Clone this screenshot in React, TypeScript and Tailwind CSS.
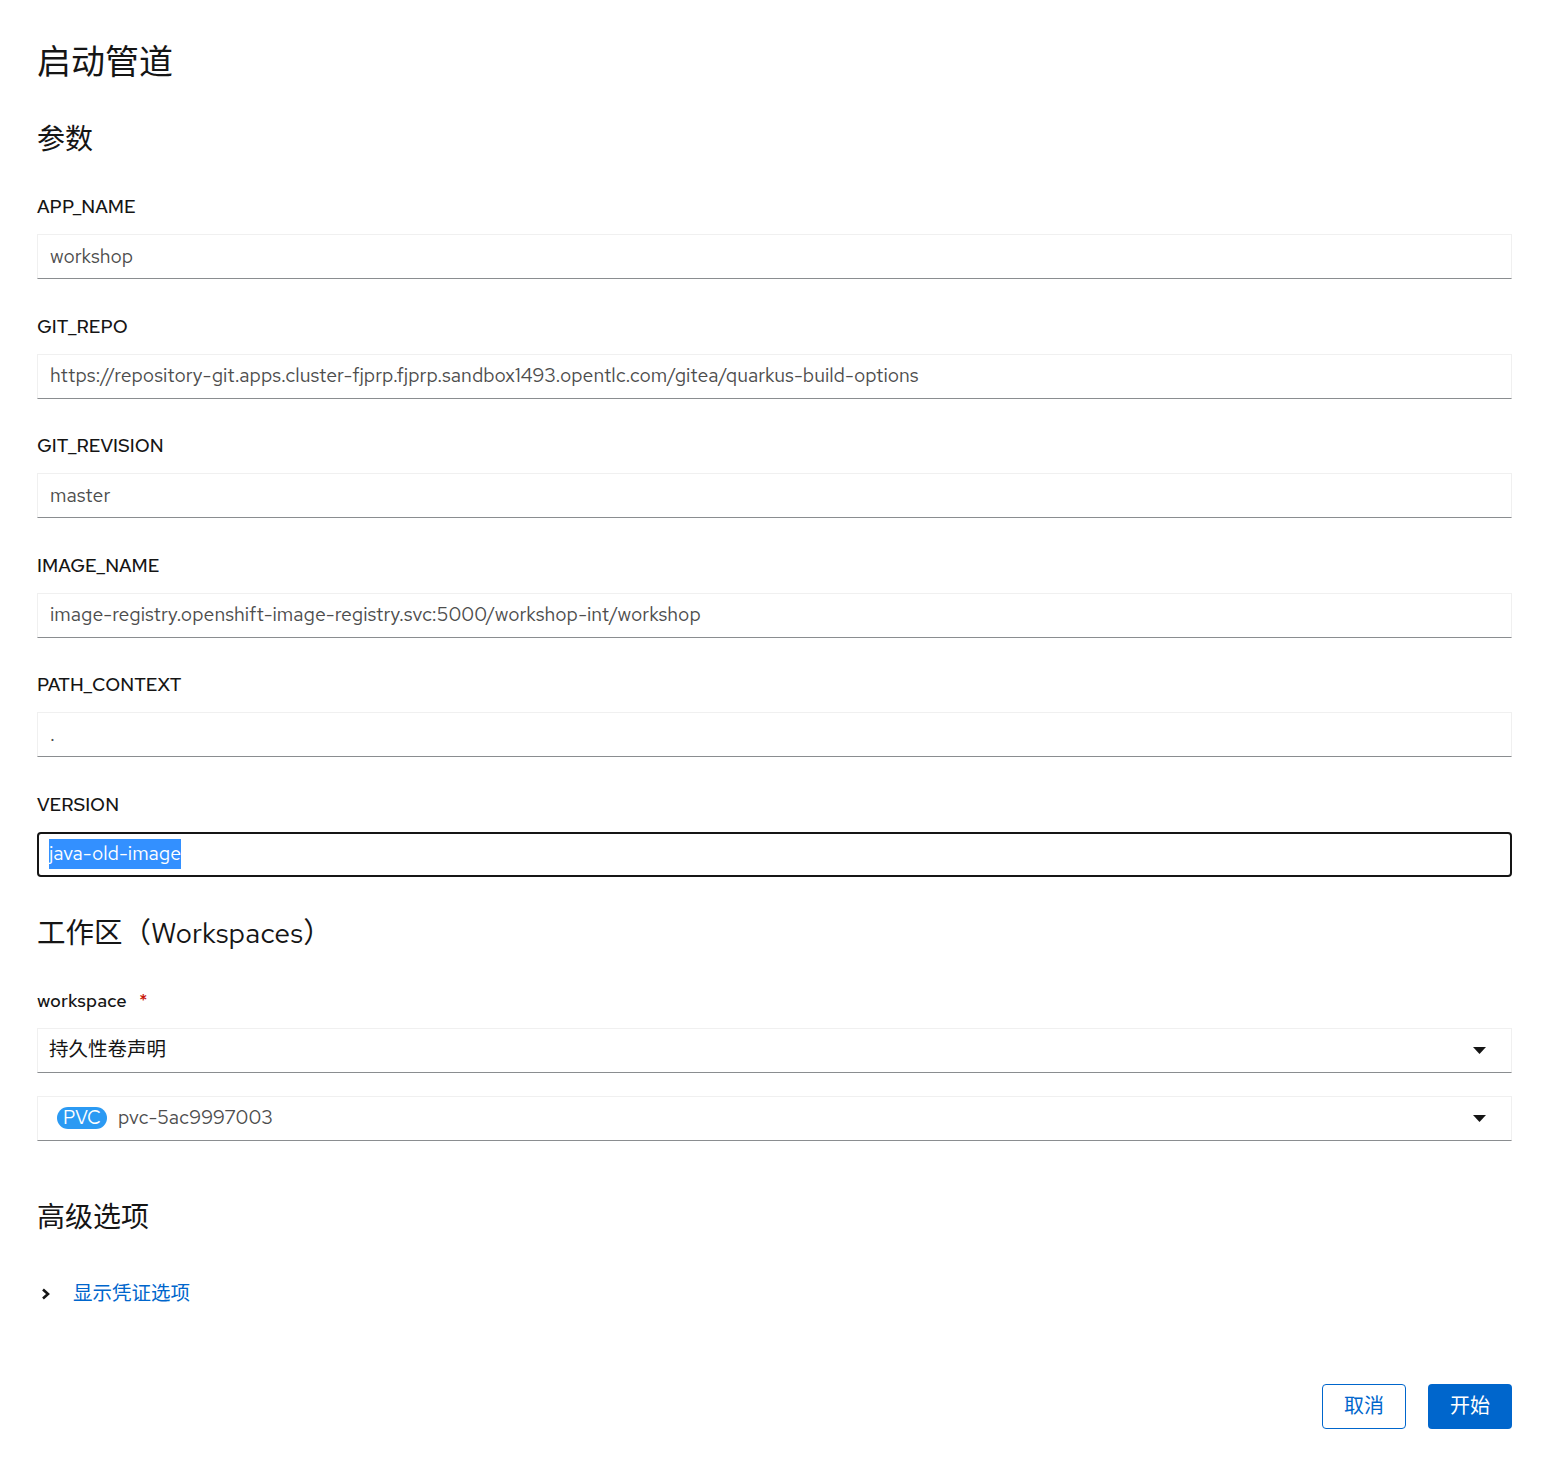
import React from 'react'

const fontStack = '"Red Hat Text", Lato, "Noto Sans CJK SC", sans-serif'

interface Param {
  name: string
  value: string
}

const params: Param[] = [
  { name: 'APP_NAME', value: 'workshop' },
  {
    name: 'GIT_REPO',
    value:
      'https://repository-git.apps.cluster-fjprp.fjprp.sandbox1493.opentlc.com/gitea/quarkus-build-options',
  },
  { name: 'GIT_REVISION', value: 'master' },
  {
    name: 'IMAGE_NAME',
    value: 'image-registry.openshift-image-registry.svc:5000/workshop-int/workshop',
  },
  { name: 'PATH_CONTEXT', value: '.' },
]

const Caret = () => (
  <svg width="13" height="7" viewBox="0 0 13 7" className="shrink-0">
    <path d="M0 0 L13 0 L6.5 7 Z" fill="#151515" />
  </svg>
)

const Field: React.FC<{ param: Param }> = ({ param }) => (
  <div className="flex flex-col">
    <label className="h-6 text-[18.5px] leading-6 font-medium text-[#151515]">{param.name}</label>
    <div className="mt-[15px] h-[45px] flex items-center px-3 border border-[#f0f0f0] border-b-[#8a8d90] text-[19.5px] text-[#4d4d4d]">
      {param.value}
    </div>
  </div>
)

export default function App() {
  return (
    <div className="min-h-screen bg-white" style={{ fontFamily: fontStack }}>
      <div className="px-[37px] pt-[42px] pb-[42px] w-[1549px]">
        <h1 className="text-[34px] leading-[40px] text-[#151515]">启动管道</h1>
        <h2 className="mt-[39px] text-[28px] leading-9 text-[#151515]">参数</h2>

        <div className="mt-[38px] w-[1475px] flex flex-col gap-[35.5px]">
          {params.map(p => (
            <Field key={p.name} param={p} />
          ))}
          {/* focused field, text selected */}
          <div className="flex flex-col">
            <label className="h-6 text-[18.5px] leading-6 font-medium text-[#151515]">VERSION</label>
            <div className="mt-[15px] h-[45px] flex items-center px-[10px] border-2 border-[#151515] rounded-[4px] text-[19.5px]">
              <span className="bg-[#3390ff] text-white">java-old-image</span>
            </div>
          </div>
        </div>

        <h2 className="mt-[38px] text-[28.5px] leading-9 text-[#151515]">工作区（Workspaces）</h2>

        <div className="mt-[38px] w-[1475px] flex flex-col">
          <label className="h-6 text-[18.5px] leading-6 font-medium text-[#151515]">
            workspace <span className="ml-2 text-[#c9190b]">*</span>
          </label>
          <div className="mt-[15px] h-[45px] flex items-center justify-between pl-[11px] pr-[25px] border border-[#f0f0f0] border-b-[#8a8d90] text-[19.5px] text-[#151515]">
            <span>持久性卷声明</span>
            <Caret />
          </div>
          <div className="mt-[23px] h-[45px] flex items-center justify-between pl-[19px] pr-[25px] border border-[#f0f0f0] border-b-[#8a8d90] text-[19.5px] text-[#4d4d4d]">
            <div className="flex items-center gap-[11px]">
              <span className="h-[22px] px-[6px] rounded-full bg-[#2b9af3] text-white text-[19px] leading-[22px]">PVC</span>
              <span>pvc-5ac9997003</span>
            </div>
            <Caret />
          </div>
        </div>

        <h2 className="mt-[58px] text-[28px] leading-9 text-[#151515]">高级选项</h2>

        <div className="mt-[47px] flex items-center h-6">
          <svg width="10" height="12" viewBox="0 0 10 12" className="ml-[4px]">
            <path d="M2 1.5 L7 6 L2 10.5" fill="none" stroke="#151515" strokeWidth="2.6" />
          </svg>
          <a className="ml-[22px] text-[19.5px] text-[#0066cc] cursor-pointer">显示凭证选项</a>
        </div>

        <div className="mt-[78px] w-[1475px] flex justify-end gap-[22px]">
          <button className="w-[84px] h-[45px] rounded-[4px] border border-[#0066cc] text-[#0066cc] text-[20px]">
            取消
          </button>
          <button className="w-[84px] h-[45px] rounded-[4px] bg-[#0066cc] text-white text-[20px]">
            开始
          </button>
        </div>
      </div>
    </div>
  )
}
